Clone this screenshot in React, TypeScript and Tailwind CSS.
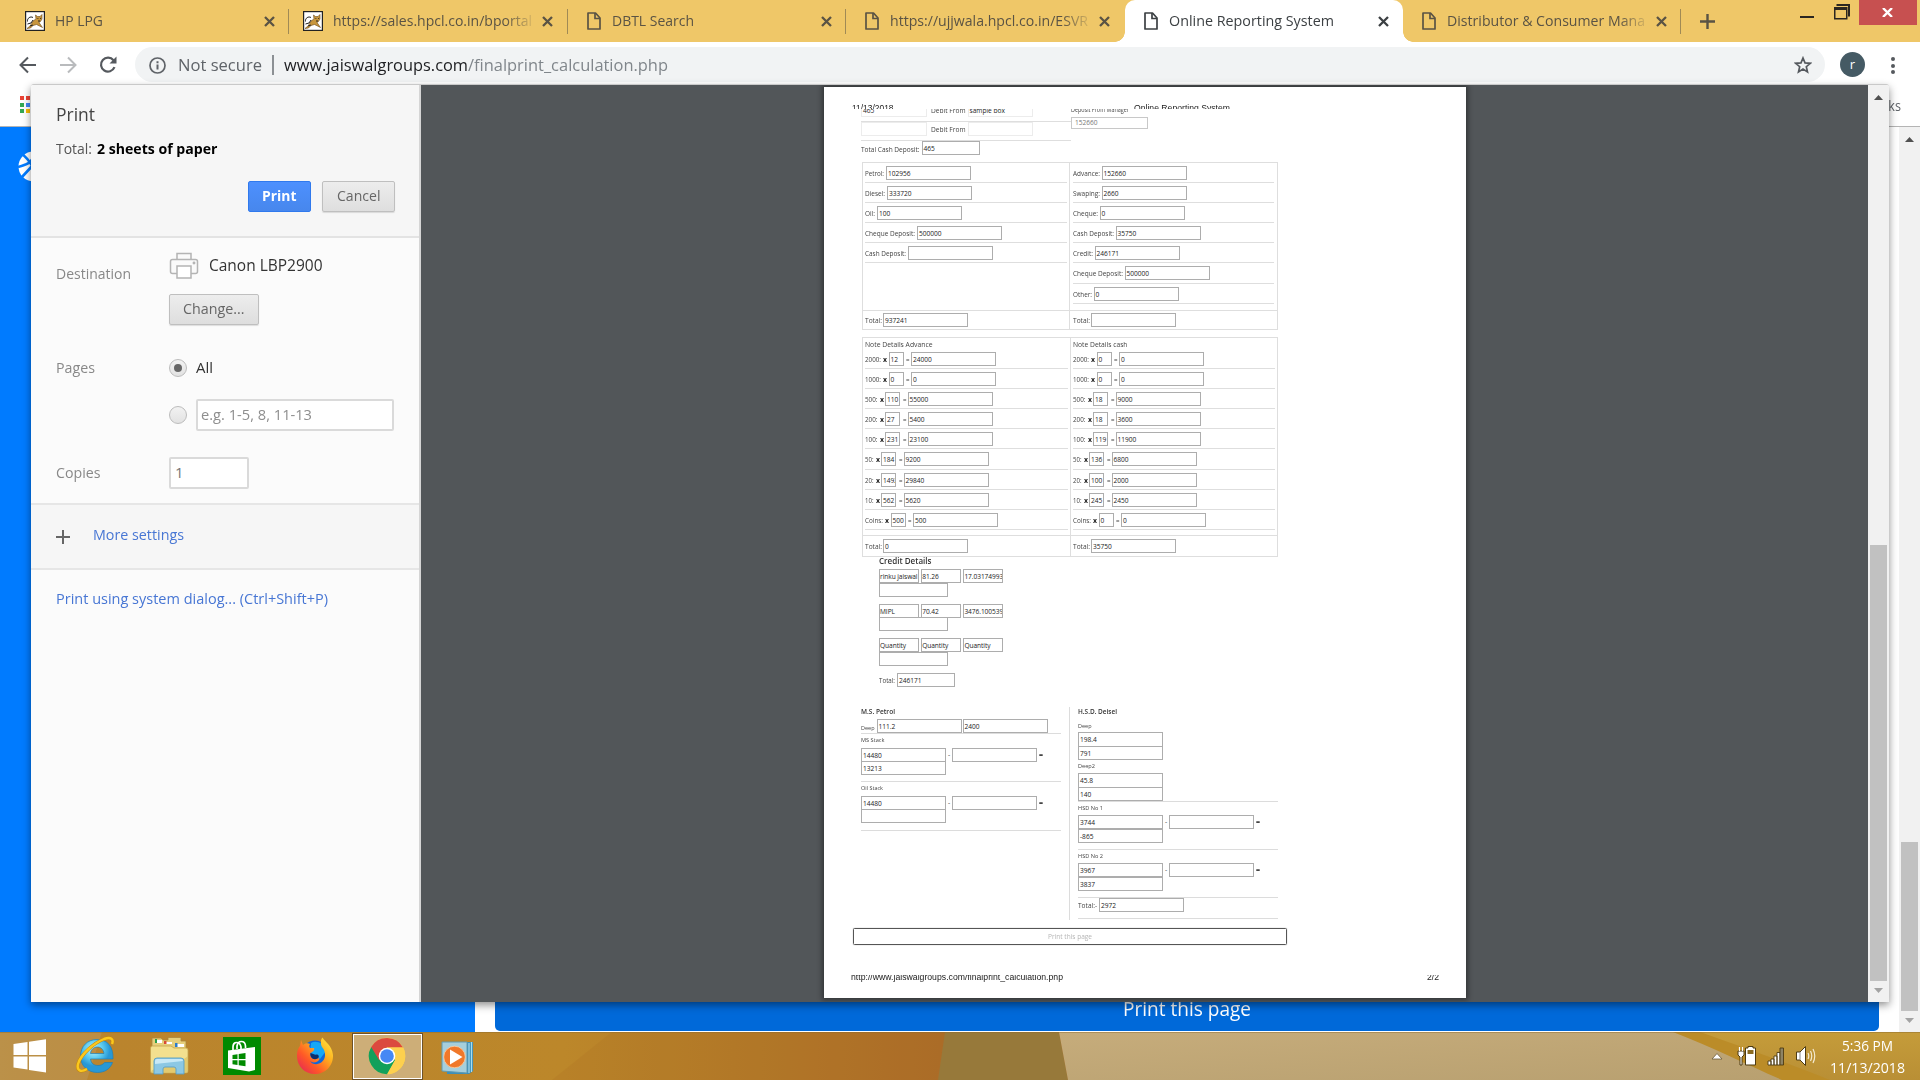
import React, { useLayoutEffect, useRef, useState } from "react";

/* Single-line text squeezed or stretched to a known width. */
function T({ w, children, className = "" }: { w: number; children: React.ReactNode; className?: string }) {
  const ref = useRef<HTMLSpanElement>(null);
  const [k, setK] = useState(1);
  useLayoutEffect(() => {
    if (ref.current) {
      const r = ref.current.getBoundingClientRect().width;
      if (r > 0) setK(w / r);
    }
  }, [w]);
  return (
    <span className={"inline-block shrink-0 whitespace-nowrap " + className} style={{ width: w }}>
      <span className="inline-block origin-left" ref={ref} style={{ transform: `scaleX(${k})` }}>
        {children}
      </span>
    </span>
  );
}

const CloseX = () => (
  <svg className="h-[11px] w-[11px]" viewBox="0 0 11 11" stroke="currentColor" strokeWidth="2.3">
    <path d="M1 1L10 10M10 1L1 10" />
  </svg>
);

const Tiger = () => (
  <svg className="h-5 w-5" viewBox="0 0 20 20">
    <rect x="0.6" y="0.6" width="18.8" height="18.8" fill="#fff" stroke="#222" strokeWidth="1.2" />
    <path d="M7 12C8 9 10 9 11 8L10.500 4L12.500 5.500L15 5.500L17 3.500L17 8L15.500 10.500L14 11.500L17.500 16.500L14.500 15L11.500 13.500L8 14.500L5.500 17L2 17.500L5 15Z" fill="#c8963c" stroke="#6b4a1a" strokeWidth="0.600" />
    <path d="M2.500 10.500C2 7 5.500 5 8 6.500M2.500 13L6 12L8 9M12.500 7.500H13.300M15 7.500H15.800M13 10H15M5 15L8 14" stroke="#222" strokeWidth="1" fill="none" />
  </svg>
);

const FileIcon = () => (
  <svg className="h-[18px] w-[14px]" viewBox="0 0 14 18" fill="none" stroke="currentColor" strokeWidth="1.7">
    <path d="M1 1H8.500L13 6V17H1Z" strokeLinejoin="round" />
    <path d="M8 1V6.500H13" />
  </svg>
);

type Tab = { text: string; w: number; icon: "tiger" | "file"; active?: boolean; fade?: boolean; sep?: boolean };
const tabs: Tab[] = [
  { text: "HP LPG", w: 48, icon: "tiger", sep: true },
  { text: "https://sales.hpcl.co.in/bportal", w: 199, icon: "tiger", fade: true, sep: true },
  { text: "DBTL Search", w: 82, icon: "file", sep: true },
  { text: "https://ujjwala.hpcl.co.in/ESVR", w: 198, icon: "file", fade: true },
  { text: "Online Reporting System", w: 165, icon: "file", active: true },
  { text: "Distributor & Consumer Mana", w: 198, icon: "file", fade: true, sep: true },
];

function TabStrip() {
  return (
    <div className="flex h-[42px] bg-[#efc768] pl-[11px] text-[#5a5344]">
      {tabs.map((t) => (
        <div
          key={t.text}
          className={
            "relative flex h-[42px] w-[278.4px] shrink-0 items-center pb-[2px] pl-[14px] " +
            (t.active ? "rounded-t-[10px] bg-white text-[#3c4043]" : "")
          }
        >
          {t.active && (
            <>
              <span className="absolute bottom-0 -left-[10px] h-[10px] w-[10px] bg-[radial-gradient(circle_at_0_0,transparent_9.5px,#fff_10px)]" />
              <span className="absolute -right-[10px] bottom-0 h-[10px] w-[10px] bg-[radial-gradient(circle_at_100%_0,transparent_9.5px,#fff_10px)]" />
            </>
          )}
          <span className="mt-[2px] flex w-[30px] shrink-0">{t.icon === "tiger" ? <Tiger /> : <span className="pl-[5px]"><FileIcon /></span>}</span>
          <span
            className={
              "w-[210px] overflow-hidden text-[15px] leading-[24px] " +
              (t.fade ? "[mask-image:linear-gradient(to_right,#000_172px,transparent_204px)]" : "")
            }
          >
            <T w={t.w}>{t.text}</T>
          </span>
          <span className="-ml-px mt-[2px] flex"><CloseX /></span>
          {t.sep && <span className="absolute top-[9px] right-0 h-[25px] w-px bg-[#a08a55]" />}
        </div>
      ))}
      <div className="flex w-[38px] items-center justify-center pr-[1px] pl-[16px]">
        <svg className="h-[15px] w-[15px] shrink-0" viewBox="0 0 15 15" stroke="#5a5344" strokeWidth="2.4"><path d="M7.500 0V15M0 7.500H15" /></svg>
      </div>
      <div className="ml-auto flex">
        <span className="mt-[16px] mr-[20px] h-[2px] w-[14px] bg-[#2b2620]" />
        <svg className="mt-[4px] mr-[9px] h-[16px] w-[16px]" viewBox="0 0 16 16" fill="none" stroke="#2b2620">
          <path d="M2.500 1H15V12.500" strokeWidth="2" />
          <rect x="0.75" y="3.75" width="12" height="11" strokeWidth="1.5" />
          <path d="M0 4.500H13" strokeWidth="3" />
        </svg>
        <span className="mr-[3px] flex h-[25px] w-[58px] items-center justify-center bg-[#c75050] pr-[2px] text-white">
          <svg className="h-[9px] w-[11px]" viewBox="0 0 11 9" stroke="#fff" strokeWidth="2.4"><path d="M1 0L10 9M10 0L1 9" /></svg>
        </span>
      </div>
    </div>
  );
}

function Toolbar() {
  return (
    <div className="flex h-[43px] items-start bg-white pt-[5px]">
      <div className="flex h-[35px] w-[135px] shrink-0 items-center pl-[19px] text-[#55595e]">
        <svg className="h-[18px] w-[18px]" viewBox="0 0 18 18" fill="none" stroke="currentColor" strokeWidth="2"><path d="M17 9H2M9 1.500L1.500 9L9 16.500" /></svg>
        <svg className="ml-[22px] h-[18px] w-[18px] text-[#b9bbbd]" viewBox="0 0 18 18" fill="none" stroke="currentColor" strokeWidth="2"><path d="M1 9H16M9 1.500L16.500 9L9 16.500" /></svg>
        <svg className="ml-[22px] h-[18px] w-[18px]" viewBox="0 0 18 18" fill="none" stroke="currentColor" strokeWidth="2.200"><path d="M15.500 11.200A7 7 0 1 1 14.500 4.200" /><path d="M17.500 0.500V7.500H10.500Z" fill="currentColor" stroke="none" /></svg>
      </div>
      <div className="flex h-[35px] w-[1690px] items-center rounded-full bg-[#f1f3f4] pt-px pl-[14px] text-[16.400px] text-[#5f6368]">
        <svg className="h-[17px] w-[17px]" viewBox="0 0 17 17" fill="none" stroke="currentColor" strokeWidth="1.700"><circle cx="8.500" cy="8.500" r="7.500" /><path d="M8.500 7.500V12.500M8.500 4.300V6.200" strokeWidth="2" /></svg>
        <T w={84} className="ml-[12px]">Not secure</T>
        <span className="ml-[10px] h-[20px] w-[1.500px] bg-[#8c9094]" />
        <T w={184} className="ml-[10px] text-[#202124]">www.jaiswalgroups.com</T>
        <T w={200} className="text-[#80868b]">/finalprint_calculation.php</T>
        <svg className="mr-[13px] ml-auto h-[18px] w-[18px]" viewBox="0 0 18 18" fill="none" stroke="#55595e" strokeWidth="1.700"><path d="M9 2L11 6.900L16.300 7.300L12.300 10.700L13.500 15.900L9 13.100L4.500 15.900L5.700 10.700L1.700 7.300L7 6.900Z" /></svg>
      </div>
      <span className="mt-[5px] ml-[15px] flex h-[25px] w-[25px] items-center justify-center rounded-full bg-[#455a64] pb-px text-[13px] leading-none text-white">r</span>
      <div className="mt-[10px] ml-[26px] flex flex-col gap-[2.500px]">
        <span className="h-[4px] w-[4px] rounded-full bg-[#55595e]" />
        <span className="h-[4px] w-[4px] rounded-full bg-[#55595e]" />
        <span className="h-[4px] w-[4px] rounded-full bg-[#55595e]" />
      </div>
    </div>
  );
}

const Tri = ({ down, c }: { down?: boolean; c: string }) => (
  <svg className="h-[5px] w-[9px] shrink-0" viewBox="0 0 9 5"><path d={down ? "M0 0H9L4.500 5Z" : "M0 5H9L4.500 0Z"} fill={c} /></svg>
);

/* ---------- printed sheet ---------- */

function Box({ w, v = "", light = false, className = "" }: { w: number; v?: string; light?: boolean; className?: string }) {
  return (
    <span
      className={
        "inline-block h-[14px] shrink-0 overflow-hidden border pl-[1px] text-[6.600px] leading-[13px] font-medium whitespace-nowrap text-[#222] " +
        (light ? "border-[#ececec] " : "border-[#adadad] ") + className
      }
      style={{ width: w }}
    >
      {v}
    </span>
  );
}

type Field = [string, number, string];
const leftFields: Field[] = [
  ["Petrol:", 19, "102956"],
  ["Diesel:", 20, "333720"],
  ["Oil:", 10, "100"],
  ["Cheque Deposit:", 50, "500000"],
  ["Cash Deposit:", 41, ""],
];
const rightFields: Field[] = [
  ["Advance:", 27, "152660"],
  ["Swaping:", 27, "2660"],
  ["Cheque:", 25, "0"],
  ["Cash Deposit:", 41, "35750"],
  ["Credit:", 20, "246171"],
  ["Cheque Deposit:", 50, "500000"],
  ["Other:", 19, "0"],
];

const FieldRow = ({ f }: { f: Field }) => (
  <div className="flex h-[20.100px] items-start border-b border-[#dedede] pt-[3px] leading-[15px]">
    <T w={f[1]}>{f[0]}</T>
    <Box w={85} v={f[2]} className="ml-[2px]" />
  </div>
);

type Note = [string, number, string, string];
const advance: Note[] = [
  ["2000:", 16, "12", "24000"],
  ["1000:", 16, "0", "0"],
  ["500:", 12.5, "110", "55000"],
  ["200:", 12.5, "27", "5400"],
  ["100:", 12.5, "231", "23100"],
  ["50:", 8.5, "184", "9200"],
  ["20:", 8.5, "1492", "29840"],
  ["10:", 8.5, "562", "5620"],
  ["Coins:", 18, "500", "500"],
];
const cash: Note[] = [
  ["2000:", 16, "0", "0"],
  ["1000:", 16, "0", "0"],
  ["500:", 12.5, "18", "9000"],
  ["200:", 12.5, "18", "3600"],
  ["100:", 12.5, "119", "11900"],
  ["50:", 8.5, "136", "6800"],
  ["20:", 8.5, "100", "2000"],
  ["10:", 8.5, "245", "2450"],
  ["Coins:", 18, "0", "0"],
];

const NoteRow = ({ n }: { n: Note }) => (
  <div className="flex h-[20.100px] items-start border-b border-[#dedede] pt-[3px] leading-[15px]">
    <T w={n[1]}>{n[0]}</T>
    <T w={4} className="ml-[2px] font-bold text-[#222]">x</T>
    <Box w={15} v={n[2]} className="ml-[1.500px]" />
    <T w={3.5} className="ml-[2.500px] font-semibold">=</T>
    <Box w={85} v={n[3]} className="ml-[1.500px]" />
  </div>
);

function Notes({ title, w, rows, total }: { title: string; w: number; rows: Note[]; total: string }) {
  return (
    <div className="flex flex-col">
      <div className="h-[197px] px-[2px] pt-[2px]">
        <div className="h-[9px] leading-[10px]"><T w={w}>{title}</T></div>
        {rows.map((n) => <NoteRow key={n[0]} n={n} />)}
      </div>
      <div className="flex h-[21px] border-t border-[#dedede] px-[2px] pt-[3px] leading-[15px]">
        <T w={17}>Total:</T>
        <Box w={85} v={total} className="ml-[1px]" />
      </div>
    </div>
  );
}

const credit = [
  ["rinku jaiswal", "81.26", "17.03174993"],
  ["MIPL", "70.42", "3476.100539"],
  ["Quantity", "Quantity", "Quantity"],
];

const Stack = ({ label, w, a, b }: { label: string; w: number; a: string; b: string }) => (
  <div className="h-[48.400px] border-b border-[#dcdcdc]">
    <div className="h-[13.500px] pt-[2px] text-[5.600px] leading-[9px]"><T w={w}>{label}</T></div>
    <div className="flex h-[13.600px] leading-[13px]">
      <Box w={85} v={a} />
      <span className="w-[6px] text-center">-</span>
      <Box w={85} />
      <T w={4} className="ml-[2px] font-bold">=</T>
    </div>
    <div className="leading-none"><Box w={85} v={b} /></div>
  </div>
);

function Sheet() {
  return (
    <div className="flex h-[911px] w-[642px] flex-col bg-white font-['Open_Sans','Noto_Sans',sans-serif] text-[6.600px] font-medium text-[#444] shadow-[0_0_5px_2px_rgba(0,0,0,0.4)]">
      <div className="mt-[17px] ml-[28px] flex h-[5px] overflow-hidden font-['Liberation_Sans',Arial,sans-serif] text-[8.200px] leading-[9px] text-[#222]">
        <T w={41.5}>11/13/2018</T>
        <T w={96} className="ml-[240px]">Online Reporting System</T>
      </div>

      <div className="ml-[37px] flex h-[53px] w-[287px]">
        <div className="w-[211px]">
          <div className="h-[13px] overflow-hidden border-b border-[#dedede]">
            <div className="-mt-[6px] flex leading-[15px]">
              <Box w={66} v="465" light />
              <T w={34.5} className="ml-[4px]">Debit From</T>
              <Box w={65} v="sample box" light className="ml-[2px]" />
            </div>
          </div>
          <div className="flex h-[19px] border-b border-[#dedede] leading-[15px]">
            <Box w={66} light />
            <T w={34.5} className="ml-[4px]">Debit From</T>
            <Box w={65} light className="ml-[2px]" />
          </div>
          <div className="flex leading-[17px]">
            <T w={58.500}>Total Cash Deposit:</T>
            <Box w={58} v="465" className="ml-[2px]" />
          </div>
        </div>
        <div>
          <div className="h-[8px] overflow-hidden"><div className="-mt-[3px] leading-[8px]"><T w={58}>Deposit From Manager</T></div></div>
          <div className="flex h-[12px] w-[77px] items-center border border-[#c8c8c8] pl-[3px] font-normal text-[#777]">152660</div>
        </div>
      </div>

      <div className="ml-[38px] grid h-[168px] w-[416px] grid-cols-[207px_1fr] border border-[#dedede]">
        <div className="flex flex-col border-r border-[#dedede]">
          <div className="h-[147px] px-[2px]">{leftFields.map((f) => <FieldRow key={f[0]} f={f} />)}</div>
          <div className="flex border-t border-[#dedede] px-[2px] pt-[2px] leading-[15px]">
            <T w={17}>Total:</T><Box w={85} v="937241" className="ml-[1px]" />
          </div>
        </div>
        <div className="flex flex-col">
          <div className="h-[147px] pr-[3px] pl-[2.500px]">{rightFields.map((f) => <FieldRow key={f[0]} f={f} />)}</div>
          <div className="flex border-t border-[#dedede] px-[2.500px] pt-[2px] leading-[15px]">
            <T w={17}>Total:</T><Box w={85} className="ml-[1px]" />
          </div>
        </div>
      </div>

      <div className="mt-[7px] ml-[38px] grid h-[220px] w-[416px] grid-cols-[208px_1fr] border border-[#dedede]">
        <div className="border-r border-[#dedede]"><Notes title="Note Details Advance" w={67.500} rows={advance} total="0" /></div>
        <Notes title="Note Details cash" w={54.500} rows={cash} total="35750" />
      </div>

      <div className="ml-[55px] h-[150px]">
        <div className="h-[12px] text-[8.200px] leading-[8px] font-semibold text-[#333]"><T w={52.500}>Credit Details</T></div>
        {credit.map((c) => (
          <div key={c[0]} className="h-[34.600px]">
            <div className="flex h-[13.600px] gap-[2.200px]">
              {c.map((v, i) => <Box key={i} w={40} v={v} className="!pl-0 tracking-[-0.06px]" />)}
            </div>
            <Box w={69} className="align-top" />
          </div>
        ))}
        <div className="flex leading-[16px]"><T w={16}>Total:</T><Box w={58} v="246171" className="ml-[2px]" /></div>
      </div>

      <div className="ml-[37px] flex h-[213px]">
        <div className="w-[209px] border-r border-[#dcdcdc]">
          <div className="h-[11.500px] text-[6.800px] leading-[10px] font-semibold text-[#333]"><T w={34}>M.S. Petrol</T></div>
          <div className="w-[200px]">
            <div className="flex h-[15.500px] border-b border-[#dcdcdc] leading-[18px]">
              <T w={13.500} className="text-[5.600px]">Deep</T>
              <Box w={85} v="111.2" className="ml-[2px]" />
              <Box w={85} v="2400" className="ml-[1px]" />
            </div>
            <Stack label="MS Stack" w={23.500} a="14480" b="13213" />
            <Stack label="Oil Stack" w={22} a="14480" b="" />
          </div>
        </div>
        <div className="ml-[8px] w-[200px]">
          <div className="h-[16px] text-[6.800px] leading-[10px] font-semibold text-[#333]"><T w={39}>H.S.D. Deisel</T></div>
          <div className="flex h-[78.500px] flex-col border-b border-[#dcdcdc] text-[5.600px]">
            <div className="h-[9.500px] leading-[6px]"><T w={13.500}>Deep</T></div>
            <div className="flex h-[27.500px] flex-col gap-0"><Box w={85} v="198.4" className="-mb-px !h-[14.500px]" /><Box w={85} v="791" className="!h-[14.500px]" /></div>
            <div className="h-[13.500px] leading-[12px]"><T w={17}>Deep2</T></div>
            <div className="flex h-[27.500px] flex-col"><Box w={85} v="45.8" className="-mb-px !h-[14.500px]" /><Box w={85} v="140" className="!h-[14.500px]" /></div>
          </div>
          <Stack label="HSD No 1" w={25} a="3744" b="-865" />
          <Stack label="HSD No 2" w={25} a="3967" b="3837" />
          <div className="flex h-[21px] border-b border-[#dcdcdc] leading-[16px]"><T w={19}>Total:-</T><Box w={85} v="2972" className="ml-[2px]" /></div>
        </div>
      </div>

      <div className="mt-[8px] ml-[29px] flex h-[17px] w-[434px] items-center justify-center rounded-[1.500px] border border-[#555] text-[#b5b5b5] shadow-[0_0_1px_#777]">
        <T w={44}>Print this page</T>
      </div>
      <div className="mt-[30px] ml-[27px] flex h-[9px] w-[588px] items-start justify-between overflow-hidden font-['Liberation_Sans',Arial,sans-serif] text-[8.600px] leading-[9px] text-[#222]">
        <T w={212} className="-mt-[2px]">http://www.jaiswalgroups.com/finalprint_calculation.php</T>
        <T w={12} className="-mt-[2px]">2/2</T>
      </div>
    </div>
  );
}

/* ---------- print dialog ---------- */

const Btn = ({ children, className = "" }: { children: React.ReactNode; className?: string }) => (
  <button className={"flex h-[31px] items-center justify-center rounded-[2px] border border-[#bfbfbf] bg-linear-to-b from-[#ededed] to-[#dedede] pb-px text-[14.500px] text-[#666] shadow-[0_1px_1px_rgba(0,0,0,0.12)] " + className}>
    {children}
  </button>
);

const Radio = ({ on }: { on?: boolean }) => (
  <span className="flex h-[18px] w-[18px] shrink-0 items-center justify-center rounded-full border border-[#bcbcbc] bg-linear-to-b from-[#f2f2f2] to-[#e2e2e2]">
    {on && <span className="h-[8px] w-[8px] rounded-full bg-[#666]" />}
  </span>
);

function PrintPanel() {
  return (
    <div className="flex w-[390px] shrink-0 flex-col border-r-2 border-[#d5d5d5] bg-[#fbfbfb] text-[15px] text-[#888]">
      <div className="h-[153px] border-b-2 border-[#e3e3e3] bg-[#f6f6f6] pt-[16px] pl-[25px]">
        <div className="h-[25px] text-[18.500px] leading-[25px] text-[#444]"><T w={39}>Print</T></div>
        <div className="mt-[10px] flex h-[25px] text-[14.500px] leading-[25px] text-[#555]">
          <T w={36}>Total:</T>
          <T w={120.500} className="ml-[5px] font-bold text-black">2 sheets of paper</T>
        </div>
        <div className="mt-[20px] flex gap-[11px] pl-[192px]">
          <button className="flex h-[31px] w-[63px] items-center justify-center rounded-[2px] border border-[#3079ed] bg-linear-to-b from-[#4d90fe] to-[#4787ed] pb-px text-[14.500px] font-bold text-white"><T w={34.500}>Print</T></button>
          <Btn className="w-[73px]"><T w={43.500}>Cancel</T></Btn>
        </div>
      </div>
      <div className="h-[267px] border-b-2 border-[#e6e6e6] pt-[14px] pl-[25px]">
        <div className="flex">
          <div className="w-[113px] leading-[43px]"><T w={75}>Destination</T></div>
          <div>
            <div className="flex h-[27px] items-center text-[16px] text-[#333]">
              <svg className="h-[28px] w-[30px]" viewBox="0 0 30 28" fill="#fafafa" stroke="#b4b4b4" strokeWidth="1.500">
                <path d="M8 8V1.500H22V8" />
                <rect x="1.500" y="7.500" width="27" height="14" rx="2" />
                <path d="M8 14H22V26H8Z" fill="#fff" />
                <circle cx="25" cy="11" r="0.700" />
              </svg>
              <T w={113.500} className="mb-px ml-[10px]">Canon LBP2900</T>
            </div>
            <Btn className="mt-[15px] w-[90px]"><T w={61.500}>Change...</T></Btn>
          </div>
        </div>
        <div className="mt-[33px] flex h-[20px] items-center">
          <div className="mb-[2px] w-[113px]"><T w={39}>Pages</T></div>
          <Radio on />
          <T w={17} className="mb-px ml-[9px] text-[#333]">All</T>
        </div>
        <div className="mt-[21px] flex h-[32px] items-center pl-[113px]">
          <Radio />
          <div className="ml-[9px] flex h-[32px] w-[198px] items-center rounded-[2px] border-2 border-[#dadada] bg-white pb-px pl-[3px] text-[#8e8e8e]"><T w={111}>e.g. 1-5, 8, 11-13</T></div>
        </div>
        <div className="mt-[26px] flex h-[32px] items-center">
          <div className="mb-px w-[113px]"><T w={44.500}>Copies</T></div>
          <div className="flex h-[32px] w-[80px] items-center rounded-[2px] border-2 border-[#dadada] bg-white pb-px pl-[4px] text-[#777]">1</div>
        </div>
      </div>
      <div className="flex h-[65px] items-center border-b-2 border-[#e6e6e6] bg-[#f6f6f6] pl-[25px] text-[#4776d4]">
        <svg className="mt-[1px] h-[14px] w-[14px]" viewBox="0 0 14 14" stroke="#666" strokeWidth="2"><path d="M7 0V14M0 7H14" /></svg>
        <T w={91} className="mb-[5px] ml-[23px]">More settings</T>
      </div>
      <div className="mt-[17px] pl-[25px] leading-[22px] text-[#4776d4]"><T w={272}>Print using system dialog... (Ctrl+Shift+P)</T></div>
    </div>
  );
}

function PrintDialog() {
  return (
    <div className="absolute top-[84px] left-[31px] flex h-[918px] w-[1858px] overflow-hidden rounded-t-[3px] border-t border-[#c9c9c9] bg-white">
      <PrintPanel />
      <div className="flex flex-1 bg-[#525659] pt-[2px] pl-[403px]"><Sheet /></div>
      <div className="flex w-[21px] shrink-0 flex-col items-center bg-[#f1f1f1] pt-[10px] pb-[9px]">
        <Tri c="#505050" />
        <span className="mt-[445px] h-[436px] w-[17px] bg-[#c1c1c1]" />
        <span className="mt-auto flex"><Tri down c="#a3a3a3" /></span>
      </div>
    </div>
  );
}

/* ---------- taskbar ---------- */

const Wallpaper = () => (
  <svg className="absolute inset-0 h-[48px] w-[1920px]" viewBox="0 0 1920 48" preserveAspectRatio="none">
    <defs>
      <linearGradient id="w1" x1="0" x2="940" y1="0" y2="0" gradientUnits="userSpaceOnUse">
        <stop offset="0" stopColor="#b98a38" /><stop offset="0.12" stopColor="#ba842d" /><stop offset="0.6" stopColor="#bc872a" />
        <stop offset="0.78" stopColor="#b57c29" /><stop offset="1" stopColor="#ad6d29" />
      </linearGradient>
      <linearGradient id="w2" x1="0" x2="1" y1="0" y2="1"><stop offset="0" stopColor="#c6ac7b" /><stop offset="1" stopColor="#b8a070" /></linearGradient>
      <linearGradient id="w3" x1="0" x2="0" y1="0" y2="1"><stop offset="0" stopColor="#c59c3a" /><stop offset="1" stopColor="#b98f35" /></linearGradient>
    </defs>
    <rect width="1920" height="48" fill="url(#w1)" />
    <path d="M0 0H102L87 48H0Z" fill="#bd985a" opacity="0.500" />
    <path d="M612 0H945L937 48H552Z" fill="#a96820" opacity="0.180" />
    <path d="M945 0H1059L1068 48H938Z" fill="#97793a" />
    <path d="M1059 0H1700L1800 48H1068Z" fill="url(#w2)" />
    <path d="M1673 0H1920V48H1782C1750 34 1710 14 1673 0Z" fill="#bb8c28" />
    <path d="M1700 0H1920V48H1830C1790 32 1740 14 1700 0Z" fill="url(#w3)" />
    <rect width="1920" height="1" fill="#8a6a30" opacity="0.450" />
  </svg>
);

function Taskbar() {
  return (
    <div className="relative h-[48px]">
      <Wallpaper />
      <div className="relative flex h-[48px] items-center">
        <svg className="ml-[13px] h-[34px] w-[34px]" viewBox="0 0 34 34" fill="#fff"><path d="M0.500 5L14.500 3V16H0.500ZM16 2.800L33 0.300V16H16ZM0.500 17.500H14.500V30.500L0.500 28.500ZM16 17.500H33V33.500L16 31Z" /></svg>
        <svg className="mb-[2px] ml-[28px] h-[40px] w-[40px]" viewBox="0 0 40 40">
          <defs><radialGradient id="ie" cx="0.4" cy="0.300"><stop offset="0" stopColor="#b8f3fd" /><stop offset="0.600" stopColor="#58c8ee" /><stop offset="1" stopColor="#2898d6" /></radialGradient></defs>
          <path d="M38 24H15.500C16 28.500 19 30.500 23 30.500C26 30.500 28 29.500 29.500 27.500H37.500C35.500 33.500 30 37.500 22.500 37.500C12.500 37.500 5.500 30.500 5.500 21.500C5.500 11 12.500 4.500 22 4.500C32.500 4.500 38.500 11.500 38 24ZM15.500 18.500H29C28.500 14.500 26 12 22.300 12C18.500 12 16 14.500 15.500 18.500Z" fill="url(#ie)" stroke="#1f7fb8" strokeWidth="0.700" />
          <path d="M37 9C39 4 36 1.500 29 4C19 8 6 19 3 29C1.500 36 6 37.500 12 34" fill="none" stroke="#c98a08" strokeWidth="3.400" />
          <path d="M37 9C39 4 36 1.500 29 4C19 8 6 19 3 29C1.500 36 6 37.500 12 34" fill="none" stroke="#fbc81e" strokeWidth="2.400" />
        </svg>
        <svg className="ml-[34px] h-[40px] w-[40px]" viewBox="0 0 40 40">
          <path d="M3 2H12L14 4H19V1.500H32V5H37V14H3Z" fill="#e6cf7c" stroke="#a9873c" strokeWidth="0.800" />
          <path d="M6 4H13V7H6ZM15 6H23V8H15ZM26 8H35V11H26Z" fill="#fff" /><path d="M6 3H8V7H6Z" fill="#2e9e4b" /><path d="M15 5H17.500V8H15Z" fill="#d94a35" /><path d="M26 7H28.500V11H26Z" fill="#2d7cc9" />
          <path d="M1.500 12Q1.500 10 3.500 10H22L25 12H37Q39 12 39 14V35Q39 37 37 37H3Q1.500 37 1.500 35Z" fill="#f3e08e" stroke="#c4a34d" strokeWidth="0.800" />
          <path d="M2 35C10 30 28 30 39 20V35Q39 37 37 37H3Z" fill="#dcc062" opacity="0.700" />
          <path d="M5 25Q5 22 8 22H32Q35 22 35 25V38H27V33Q27 31 25 31H16Q14 31 14 33V38H5Z" fill="#8cc8e4" stroke="#5a9fc4" strokeWidth="0.900" />
          <path d="M6 25Q6 23 8 23H32Q34 23 34 25L6 28Z" fill="#c8e9f6" />
        </svg>
        <div className="ml-[34px] flex h-[38px] w-[38px] items-center justify-center bg-[#008a00]">
          <svg className="h-[32px] w-[30px]" viewBox="0 0 30 32">
            <path d="M6 11V7C6 1 13 1 14 7V9M10 9V6C11 0 18 0 18.500 6V8" fill="none" stroke="#fff" strokeWidth="1.700" />
            <path d="M1 10.500L28 7V30L22 31.500L1 28Z" fill="#fff" />
            <path d="M5.500 15L10.500 14.300V19H5.500ZM11.700 14.100L18.500 13V19H11.700ZM5.500 20.200H10.500V25L5.500 24.300ZM11.700 20.200H18.500V26.300L11.700 25.200Z" fill="#008a00" />
          </svg>
        </div>
        <svg className="ml-[35px] h-[38px] w-[38px]" viewBox="0 0 38 38">
          <defs><linearGradient id="ff" x1="1" y1="0" x2="0" y2="1"><stop offset="0" stopColor="#fff04a" /><stop offset="0.350" stopColor="#ffb01e" /><stop offset="0.650" stopColor="#ff5a26" /><stop offset="1" stopColor="#e01a62" /></linearGradient></defs>
          <circle cx="19" cy="17" r="13.500" fill="#1267d8" />
          <path d="M15 6C20 3 28 6 30 14L24 22L14 16Z" fill="#16a7f5" />
          <path d="M5 3L7 8C9 6 12 5.500 14 7C13 8.500 13 9.500 14 11H18C19 13 16.500 15 14.500 16C13 20 17 23 21 21.500C23 21 24 21.500 23 23C21 26 16 26 14 24C18 30 28 27 29 19C29.500 14 27 11 26 10C24 6 25 2 26.500 0.500C29 5 36 8 37 18C37.500 29 29 37 19 37C8.500 37 1 29 1 19C1 13 3 10 4 9Z" fill="url(#ff)" />
          <path d="M14.500 16C17 17 19 18 21 17.500C24 18 23 22 20 22C17 23 14 20 14.500 16Z" fill="#0d2f6b" />
        </svg>
        <div className="ml-[18px] flex h-[47px] w-[71px] items-center justify-center border border-[#6d5129] bg-[#cdae78] shadow-[inset_0_0_0_1px_#fff]">
          <svg className="mr-[1px] h-[38px] w-[38px]" viewBox="0 0 38 38">
            <circle cx="19" cy="19" r="18.200" fill="#fdd04e" />
            <path d="M19 19L3.200 10A18.200 18.200 0 0 0 19.500 37.200L28 22Z" fill="#12a05b" />
            <path d="M3.200 10A18.200 18.200 0 0 1 35 10.500L19 10.500L11.300 23.500Z" fill="#db4a3f" />
            <path d="M19 10.500H35.200A18.200 18.200 0 0 1 19 37.200L27 23Z" fill="#fdd04e" />
            <circle cx="19" cy="19" r="8.300" fill="#fff" /><circle cx="19" cy="19" r="6.800" fill="#4688f4" />
          </svg>
        </div>
        <svg className="mt-[4px] ml-[18px] h-[34px] w-[34px]" viewBox="0 0 34 34">
          <path d="M6 1H32V30L28 33H6Z" fill="#3d8fb8" /><path d="M28 2V32M30.500 1V31" stroke="#a8dcf0" strokeWidth="1.200" />
          <path d="M1 1H26V32L1 30Z" fill="#a6cfdc" stroke="#5e9ab2" />
          <circle cx="13.500" cy="16" r="10.800" fill="#f0782a" stroke="#fbd2a8" strokeWidth="0.800" /><path d="M9 8.500L21.500 16L9 23.500Z" fill="#fff" />
        </svg>

        <div className="mr-[12px] ml-auto flex items-center">
          <svg className="h-[8px] w-[12px]" viewBox="0 0 12 8"><path d="M1 7L6 1.500L11 7Z" fill="#fff" stroke="#6b5a38" strokeWidth="0.800" /></svg>
          <svg className="ml-[14px] h-[22px] w-[20px]" viewBox="0 0 20 22" stroke="#4d3b12" strokeWidth="1">
            <path d="M1 6H7V10L5 12V20H3V12L1 10Z" fill="#fff" /><path d="M2.500 2V6M5.500 2V6" stroke="#fff" strokeWidth="1.200" />
            <path d="M8.500 3H11V1.500H16V3H18.500V20H8.500Z" fill="#fff" /><path d="M10.500 5H16.500V9H10.500Z" fill="#8a6a20" stroke="none" />
          </svg>
          <svg className="ml-[10px] h-[19px] w-[18px]" viewBox="0 0 18 19" fill="#fff" stroke="#4d3b12" strokeWidth="0.900">
            <path d="M1 14H4V18H1ZM4 12H7V18H4ZM7 9H10V18H7ZM10 5.500H13V18H10Z" /><path d="M13 1H16.500V18H13Z" fill="#8d8365" />
          </svg>
          <svg className="ml-[10px] h-[22px] w-[22px]" viewBox="0 0 22 22" fill="none">
            <path d="M1.500 7H5L10.500 1.500V20.500L5 15H1.500Z" fill="#fff" stroke="#4d3b12" /><path d="M5 7V15" stroke="#888" />
            <path d="M13 8Q14.500 11 13 14M15.500 6Q18 11 15.500 16M18 4Q21.500 11 18 18" stroke="#f4ead0" strokeWidth="1.200" />
          </svg>
          <div className="ml-[10px] flex w-[81px] flex-col items-center text-[15px] leading-[22px] text-white">
            <T w={51}>5:36 PM</T>
            <T w={75}>11/13/2018</T>
          </div>
        </div>
      </div>
    </div>
  );
}

const appDots = ["bg-[#ea4335]", "bg-[#ea4335]", "bg-[#34a853]", "bg-[#4285f4]", "bg-[#34a853]", "bg-[#fbbc05]"];

export default function App() {
  return (
    <div className="relative flex h-[1080px] w-[1920px] flex-col overflow-hidden bg-white font-['Open_Sans','Noto_Sans',sans-serif]">
      <TabStrip />
      <Toolbar />
      <div className="flex h-[42px] items-start justify-between border-b border-[#b4b4b4] bg-white pr-[19px] pl-[20px]">
        <div className="mt-[11px] grid grid-cols-2 gap-x-[2px] gap-y-[2.500px]">
          {appDots.map((c, i) => <span key={i} className={"h-[4px] w-[4px] " + c} />)}
        </div>
        <span className="mt-[9px] flex text-[15px] leading-[22px] text-[#5f6368]"><T w={66}>bookmarks</T></span>
      </div>
      <div className="flex h-[905px]">
        <div className="w-[475px] shrink-0 bg-[#007bff] pt-[24px] pl-[18px]">
          <svg className="h-[31px] w-[31px]" viewBox="0 0 31 31"><circle cx="15.500" cy="15.500" r="15" fill="#fff" /><path d="M4 3C12 9 18 20 20 30M0 16C8 14 14 12 17 3M4 26L16 13" stroke="#007bff" strokeWidth="2.600" fill="none" /></svg>
        </div>
        <div className="flex flex-1 items-end bg-white pb-px pl-[20px]">
          <div className="flex h-[60px] w-[1384px] items-end justify-center rounded-[5px] bg-[#0069d9] pb-[8px] text-[20px] leading-[28px] text-white">
            <T w={128}>Print this page</T>
          </div>
        </div>
        <div className="flex w-[21px] shrink-0 flex-col items-center bg-[#f1f1f1] pt-[10px] pb-[9px]">
          <Tri c="#505050" />
          <span className="mt-[700px] h-[169px] w-[17px] bg-[#c1c1c1]" />
          <span className="mt-auto flex"><Tri down c="#a3a3a3" /></span>
        </div>
      </div>
      <Taskbar />
      <div className="pointer-events-none absolute top-[85px] left-[31px] h-[917px] w-[1858px] shadow-[0_3px_8px_rgba(0,0,0,0.45)]" />
      <PrintDialog />
    </div>
  );
}
